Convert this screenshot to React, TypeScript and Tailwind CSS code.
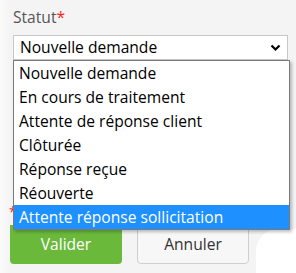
import React from "react";

const options = [
  "Nouvelle demande",
  "En cours de traitement",
  "Attente de réponse client",
  "Clôturée",
  "Réponse reçue",
  "Réouverte",
  "Attente réponse sollicitation",
];

export default function App() {
  return (
    <div
      className="relative w-[296px] h-[273px] overflow-hidden bg-[#f4f4f4]"
      style={{ fontFamily: '"Open Sans", sans-serif' }}
    >
      <div className="absolute left-0 top-0 h-full w-[10px] bg-gradient-to-r from-[#fbfbfb] to-[#f4f4f4]" />
      <div className="relative pl-[13px] pr-[8px] pt-[5px]">
        <label className="block text-[15.6px] leading-[24px] text-[#555]">
          Statut<span className="text-[#ff2020]">*</span>
        </label>
        <div className="mt-[6px] h-[25px] border border-[#c8c8c8] bg-white flex items-center justify-between pl-[6px] pr-[6px] text-[15.6px] text-black">
          <span>Nouvelle demande</span>
          <svg width="11" height="8" viewBox="0 0 11 8">
            <path d="M1.5 1.5 L5.5 5.5 L9.5 1.5" stroke="#000" strokeWidth="2.2" fill="none" />
          </svg>
        </div>
        <div className="mt-[145px] text-[#ff2020] text-[14px] leading-none -ml-[4px]">*</div>
        <div className="mt-[6px] -ml-[3px] flex gap-[15px]">
          <button className="w-[112px] h-[39px] rounded-b-[4px] bg-[#6ab93b] text-white text-[15.6px]">
            Valider
          </button>
          <button className="w-[112px] h-[39px] rounded-b-[4px] border border-[#cfcfcf] bg-[#f7f7f7] text-[#333] text-[15.6px]">
            Annuler
          </button>
        </div>
      </div>
      <div className="absolute left-[256px] top-[229px] w-[60px] h-[60px] rounded-tl-[22px] rounded-tr-[10px] bg-white" />
      <ul className="absolute left-[13px] top-[60px] w-[277px] border border-[#7a7a7a] bg-white shadow-[2px_2px_3px_rgba(0,0,0,0.25)] text-[15.6px] text-black">
        {options.map((o, i) => (
          <li
            key={o}
            className={`h-[24px] leading-[24px] pl-[5px] ${
              i === options.length - 1 ? "bg-[#1e90ff] text-white" : ""
            }`}
          >
            {o}
          </li>
        ))}
      </ul>
    </div>
  );
}
